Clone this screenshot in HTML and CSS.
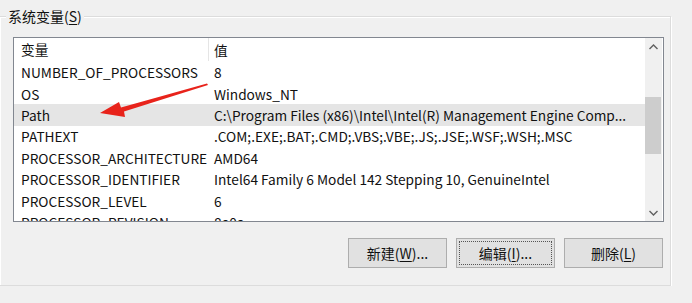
FILE: index.html
```html
<!DOCTYPE html>
<html lang="zh-CN">
<head>
  <meta charset="UTF-8">
  <title>系统变量</title>
  <link rel="stylesheet" href="styles.css">
</head>
<body>
  <!-- System variables group box -->
  <div class="group">
    <div class="group-title">系统变量(<u>S</u>)</div>

    <div class="listbox">
      <div class="list">
        <div class="row head">
          <span class="c1">变量</span>
          <span class="c2">值</span>
        </div>
        <div class="row"><span class="c1">NUMBER_OF_PROCESSORS</span><span class="c2">8</span></div>
        <div class="row"><span class="c1">OS</span><span class="c2">Windows_NT</span></div>
        <div class="row selected"><span class="c1">Path</span><span class="c2">C:\Program Files (x86)\Intel\Intel(R) Management Engine Comp...</span></div>
        <div class="row"><span class="c1">PATHEXT</span><span class="c2">.COM;.EXE;.BAT;.CMD;.VBS;.VBE;.JS;.JSE;.WSF;.WSH;.MSC</span></div>
        <div class="row"><span class="c1">PROCESSOR_ARCHITECTURE</span><span class="c2">AMD64</span></div>
        <div class="row"><span class="c1">PROCESSOR_IDENTIFIER</span><span class="c2">Intel64 Family 6 Model 142 Stepping 10, GenuineIntel</span></div>
        <div class="row"><span class="c1">PROCESSOR_LEVEL</span><span class="c2">6</span></div>
        <div class="row"><span class="c1">PROCESSOR_REVISION</span><span class="c2">8e0a</span></div>
      </div>

      <div class="scrollbar">
        <div class="sb-btn">
          <svg width="9" height="6" viewBox="0 0 9 6"><path d="M0.5 5 L4.5 1 L8.5 5" fill="none" stroke="#606060" stroke-width="1.4"/></svg>
        </div>
        <div class="sb-track"><div class="sb-thumb"></div></div>
        <div class="sb-btn">
          <svg width="9" height="6" viewBox="0 0 9 6"><path d="M0.5 1 L4.5 5 L8.5 1" fill="none" stroke="#606060" stroke-width="1.4"/></svg>
        </div>
      </div>
    </div>

    <div class="buttons">
      <button class="btn">新建(<u>W</u>)...</button>
      <button class="btn focused">编辑(<u>I</u>)...</button>
      <button class="btn">删除(<u>L</u>)</button>
    </div>
  </div>

  <!-- Red annotation arrow pointing at Path -->
  <svg class="arrow" width="692" height="303" viewBox="0 0 692 303">
    <polygon points="207,83.5 208,85 124,111.5 125,117 100,113 119,102 121,107.5" fill="#e8231b"/>
  </svg>
</body>
</html>
```

FILE: styles.css
```css
* {
  box-sizing: border-box;
}
html, body {
  margin: 0;
  padding: 0;
  background: #f0f0f0;
  font-family: "Noto Sans CJK SC", "Open Sans", sans-serif;
  font-size: 14px;
  color: #111;
  overflow: hidden;
}
u {
  text-decoration: underline;
  text-underline-offset: 2px;
}

/* Group box */
.group {
  position: relative;
  margin: 16px 0 0 -1px;
  width: 672px;
  height: 270px;
  border: 1px solid #dcdcdc;
  box-shadow: inset 1px 1px 0 #fff, 1px 1px 0 #fff;
  padding: 20px 7px 0 13px;
}
.group-title {
  position: absolute;
  left: 6px;
  top: -11px;
  padding: 0 2px;
  background: #f0f0f0;
  line-height: 20px;
}

/* List view */
.listbox {
  display: flex;
  width: 651px;
  height: 185px;
  border: 1px solid #828790;
  background: #fff;
}
.list {
  flex: 1;
  overflow: hidden;
}
.row {
  display: flex;
  height: 21.4px;
  align-items: center;
  white-space: nowrap;
  font-size: 13.7px;
}
.row.head {
  height: 23.5px;
}
.row.selected {
  background: #e5e5e5;
}
.c1 {
  flex: none;
  width: 195px;
  padding-left: 7px;
  border-right: 1px solid transparent;
  overflow: hidden;
}
.head .c1 {
  border-right-color: #e5e5e5;
  line-height: 23px;
}
.c2 {
  padding-left: 5px;
  overflow: hidden;
}

/* Scrollbar */
.scrollbar {
  flex: none;
  width: 17px;
  display: flex;
  flex-direction: column;
  background: #f0f0f0;
  margin-right: 1px;
}
.sb-btn {
  height: 17px;
  display: flex;
  align-items: center;
  justify-content: center;
}
.sb-track {
  flex: 1;
  padding-top: 42px;
}
.sb-thumb {
  height: 57px;
  background: #cdcdcd;
  margin: 0 1px 0 0;
}

/* Buttons */
.buttons {
  display: flex;
  justify-content: flex-end;
  gap: 9px;
  margin-top: 16px;
}
.btn {
  width: 99px;
  height: 30px;
  background: #e1e1e1;
  border: 1px solid #adadad;
  font-family: "Noto Sans CJK SC", "Open Sans", sans-serif;
  font-size: 14px;
  color: #111;
  padding: 0;
}
.btn.focused {
  outline: 1px dotted #555;
  outline-offset: -4px;
}

/* Annotation */
.arrow {
  position: absolute;
  left: 0;
  top: 0;
  pointer-events: none;
}
```
